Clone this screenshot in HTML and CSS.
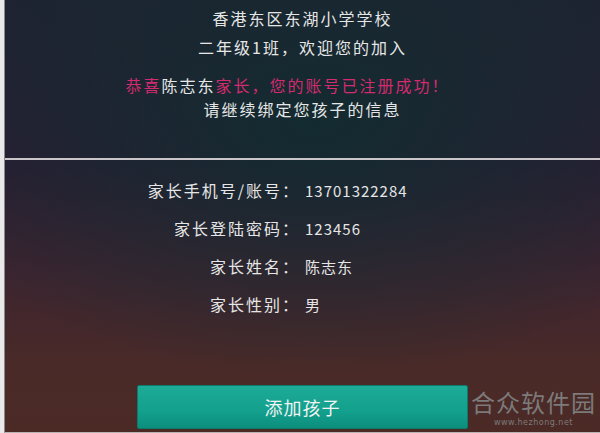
FILE: index.html
```html
<!DOCTYPE html>
<html>
<head>
    <title>绑定孩子</title>
    <link rel="stylesheet" href="styles.css">
</head>
<body>
    <div class="screen">
        <!-- Приветствие -->
        <div class="welcome">
            <p class="school">香港东区东湖小学学校</p>
            <p class="klass">二年级1班，欢迎您的加入</p>
            <p class="congrats">恭喜<span class="name">陈志东</span>家长，您的账号已注册成功！</p>
            <p class="hint">请继续绑定您孩子的信息</p>
        </div>

        <div class="divider"></div>

        <!-- Данные родителя -->
        <div class="info">
            <span class="label">家长手机号/账号：</span><span class="value">13701322284</span>
            <span class="label">家长登陆密码：</span><span class="value">123456</span>
            <span class="label">家长姓名：</span><span class="value">陈志东</span>
            <span class="label">家长性别：</span><span class="value">男</span>
        </div>

        <div class="actions">
            <button class="add-child">添加孩子</button>
        </div>

        <div class="watermark">
            <div class="wm-title">合众软件园</div>
            <div class="wm-url">www.hezhong.net</div>
        </div>
    </div>
</body>
</html>
```

FILE: styles.css
```css
/* Стили для страницы */
html, body {
    margin: 0;
    height: 100%;
    background: #e9e9e9;
}
.screen {
    position: relative;
    box-sizing: border-box;
    height: 433px;
    margin-left: 4px;
    border-left: 1px solid #8a8a8a;
    border-bottom: 1px solid #b9b4b4;
    display: flex;
    flex-direction: column;
    overflow: hidden;
    font-family: "Noto Sans CJK SC", "Noto Sans", sans-serif;
    color: #e6e6e6;
    background:
        radial-gradient(ellipse 420px 260px at 52% 28%, rgba(18, 44, 48, 0.95), rgba(18, 44, 48, 0) 100%),
        linear-gradient(180deg, #1f2231 0%, #2a1d33 38%, #3c2430 62%, #4a2a28 85%, #4b2a26 100%);
}
.welcome {
    height: 158px;
    box-sizing: border-box;
    padding-top: 6px;
    text-align: center;
}
.welcome p {
    margin: 0;
    line-height: 24px;
    font-size: 16px;
    letter-spacing: 2px;
}
.klass {
    margin-top: 5px !important;
}
.congrats {
    margin-top: 14px !important;
    padding-right: 30px;
    color: #d42a6f;
}
.congrats .name {
    color: #e6e6e6;
}
.divider {
    height: 2px;
    background: #c9c5c9;
}
.info {
    display: grid;
    grid-template-columns: 1fr 1fr;
    grid-auto-rows: 38px;
    column-gap: 5px;
    align-items: center;
    padding-top: 11px;
    font-size: 16px;
}
.label {
    text-align: right;
    letter-spacing: 2px;
}
.value {
    font-size: 15px;
    letter-spacing: 1px;
}
.actions {
    margin-top: auto;
    padding-bottom: 3px;
    display: flex;
    justify-content: center;
}
.add-child {
    width: 331px;
    height: 44px;
    border: 1px solid #0b7b6c;
    border-radius: 2px;
    background: linear-gradient(180deg, #1cab97 0%, #13a08d 60%, #0c8e7d 100%);
    color: #f2f2f2;
    font-family: inherit;
    font-size: 18px;
    letter-spacing: 1px;
}
.watermark {
    position: absolute;
    right: 4px;
    bottom: 4px;
    text-align: center;
    color: #7c7a7a;
}
.wm-title {
    font-size: 24px;
    line-height: 28px;
    letter-spacing: 1px;
}
.wm-url {
    margin-top: 2px;
    font-family: "DejaVu Sans", sans-serif;
    font-size: 8px;
    letter-spacing: 0.5px;
    line-height: 10px;
}
```
